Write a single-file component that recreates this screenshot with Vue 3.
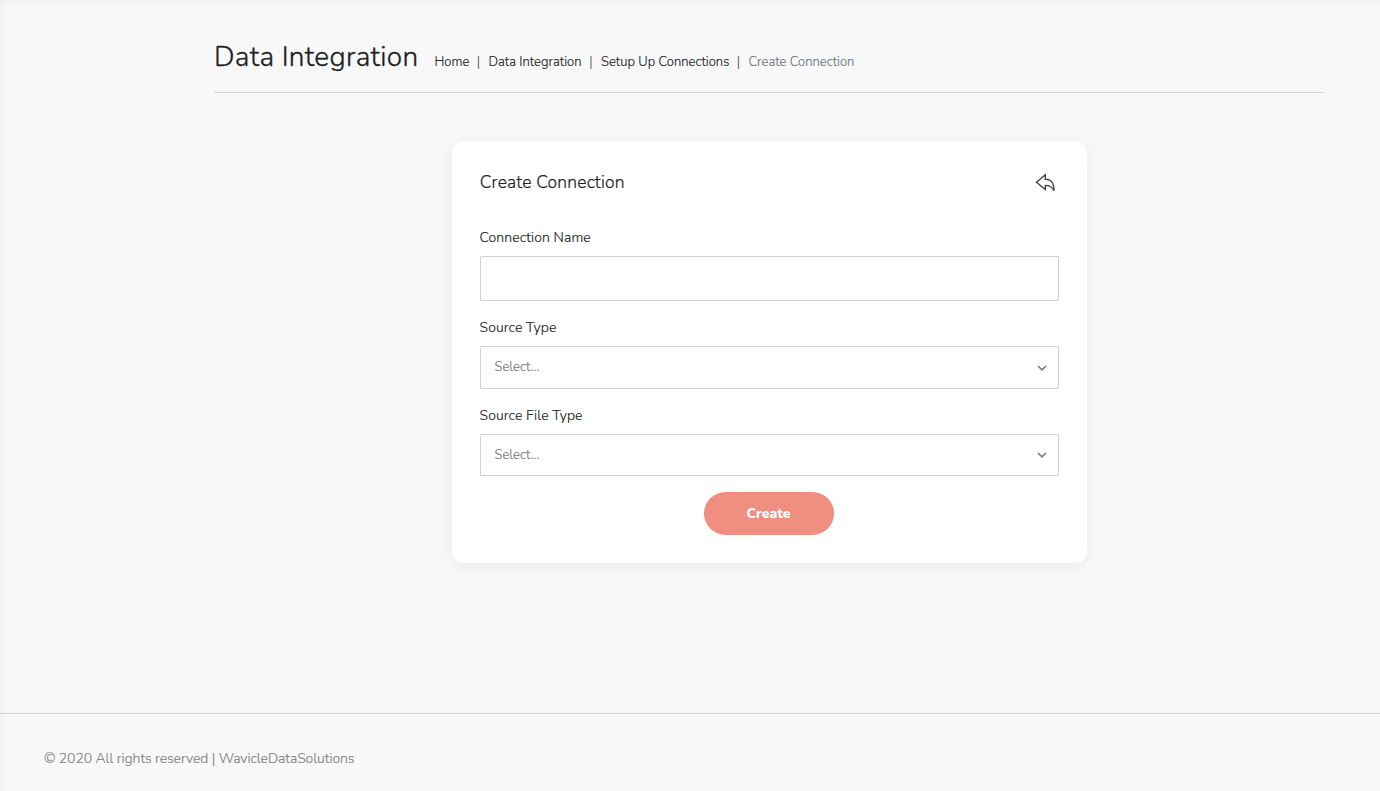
<script setup>
import { ref } from 'vue'

const crumbs = [
  { label: 'Home', key: 'home' },
  { label: 'Data Integration', key: 'data' },
  { label: 'Setup Up Connections', key: 'setup' },
  { label: 'Create Connection', key: 'create' },
]
const selects = [
  { label: 'Source Type', key: 'type' },
  { label: 'Source File Type', key: 'file' },
]
const connectionName = ref('')
</script>

<template>
  <div class="page">
    <header class="head">
      <h1>Data Integration</h1>
      <nav class="crumbs">
        <template v-for="(c, i) in crumbs" :key="c.key">
          <span v-if="i" class="bar">|</span>
          <a :class="['crumb', c.key]">{{ c.label }}</a>
        </template>
      </nav>
    </header>

    <main class="card">
      <div class="card-head">
        <h2>Create Connection</h2>
        <svg class="back" width="22" height="20" viewBox="0 0 22 20" fill="none" stroke="#44444c" stroke-width="1.4" stroke-linejoin="miter">
          <path d="M1.5 9.3 10.3 1.8V6.2C16.2 6.2 19 9 19 17.8C17.2 13.8 15 12.4 10.3 12.4V16.6Z" />
        </svg>
      </div>
      <label class="name-label">Connection Name</label>
      <input v-model="connectionName" class="name" type="text" />
      <div v-for="s in selects" :key="s.key" :class="['field', s.key]">
        <label>{{ s.label }}</label>
        <div class="select">
          <span>Select...</span>
          <svg width="10" height="6" viewBox="0 0 10 6" fill="none" stroke="#7c7c7c" stroke-width="1.6">
            <path d="M1 1 5 4.8 9 1" />
          </svg>
        </div>
      </div>
      <button type="button">Create</button>
    </main>

    <footer>© 2020 All rights reserved | WavicleDataSolutions</footer>
  </div>
</template>

<style>
body {
  background: #f8f8f8;
}
</style>

<style scoped>
* {
  box-sizing: border-box;
}
.page {
  display: flex;
  flex-direction: column;
  height: 791px;
  overflow: hidden;
  background: #f8f8f8;
  box-shadow: inset 5px 4px 9px -3px rgba(0, 0, 0, 0.035);
  color: #212121;
  font-family: Nunito, "Open Sans", sans-serif;
  font-weight: 300;
  -webkit-text-stroke: 0.15px currentColor;
}
.head {
  display: flex;
  height: 93px;
  margin: 0 56px 0 214px;
  border-bottom: 1px solid #d3d6d6;
  white-space: nowrap;
}
h1 {
  width: 220px;
  margin: 38px 0 0;
  font-size: 28px;
  font-weight: 300;
  letter-spacing: 0.3px;
  line-height: 38px;
  -webkit-text-stroke-width: 0.3px;
}
.crumbs {
  display: flex;
  margin-top: 52px;
  padding-left: 0.4px;
  font-size: 13px;
  letter-spacing: 0.03px;
  line-height: 20px;
}
.bar {
  width: 20px;
  color: #555;
  text-align: center;
}
.home {
  width: 34px;
}
.data {
  width: 92.6px;
}
.setup {
  width: 127.4px;
}
.create {
  color: #6c757d;
}
.card {
  display: flex;
  flex-direction: column;
  width: 635px;
  height: 422px;
  margin: 48px 0 0 452px;
  padding: 0 28px;
  border-radius: 12px;
  background: #fff;
  box-shadow: 0 3px 16px rgba(0, 0, 0, 0.06);
}
.card-head {
  display: flex;
  justify-content: space-between;
  height: 86px;
  padding: 28px 2px 0 0;
}
h2 {
  margin: 0 0 0 -0.3px;
  font-size: 17.5px;
  font-weight: 300;
  letter-spacing: 0.17px;
  line-height: 26px;
  -webkit-text-stroke-width: 0.2px;
}
.back {
  margin-top: 4px;
}
label {
  display: block;
  height: 19px;
  margin-left: -0.4px;
  font-size: 14px;
  letter-spacing: 0.1px;
  line-height: 22px;
}
.name {
  flex: none;
  width: 579px;
  height: 45px;
  margin: 10px 0 16px;
  border: 1px solid #d0d3d3;
  border-radius: 1px;
  background: #fff;
  outline: none;
}
.field {
  height: 88px;
}
.select {
  display: flex;
  align-items: center;
  justify-content: space-between;
  height: 43px;
  margin-top: 10px;
  padding: 0 11px 0 13.5px;
  border: 1px solid #d0d3d3;
  border-radius: 1px;
  color: #777;
  font-size: 13px;
  letter-spacing: 0.06px;
}
.select span {
  margin-top: -2px;
}
.file .select {
  height: 42px;
}
.file .select span {
  margin-top: -1px;
}
button {
  width: 130px;
  height: 43px;
  margin: -1px 0 0 224px;
  padding: 0 1px 0 0;
  border: 0;
  border-radius: 22px;
  background: #ef8e81;
  color: #fff;
  font: 800 14px Nunito, "Open Sans", sans-serif;
  -webkit-text-stroke-width: 0;
}
footer {
  height: 78px;
  margin-top: 150px;
  padding: 34px 44px 0;
  border-top: 1px solid #d3d5d5;
  color: #7f7f7f;
  font-size: 14px;
  letter-spacing: -0.075px;
  line-height: 22px;
}
</style>
